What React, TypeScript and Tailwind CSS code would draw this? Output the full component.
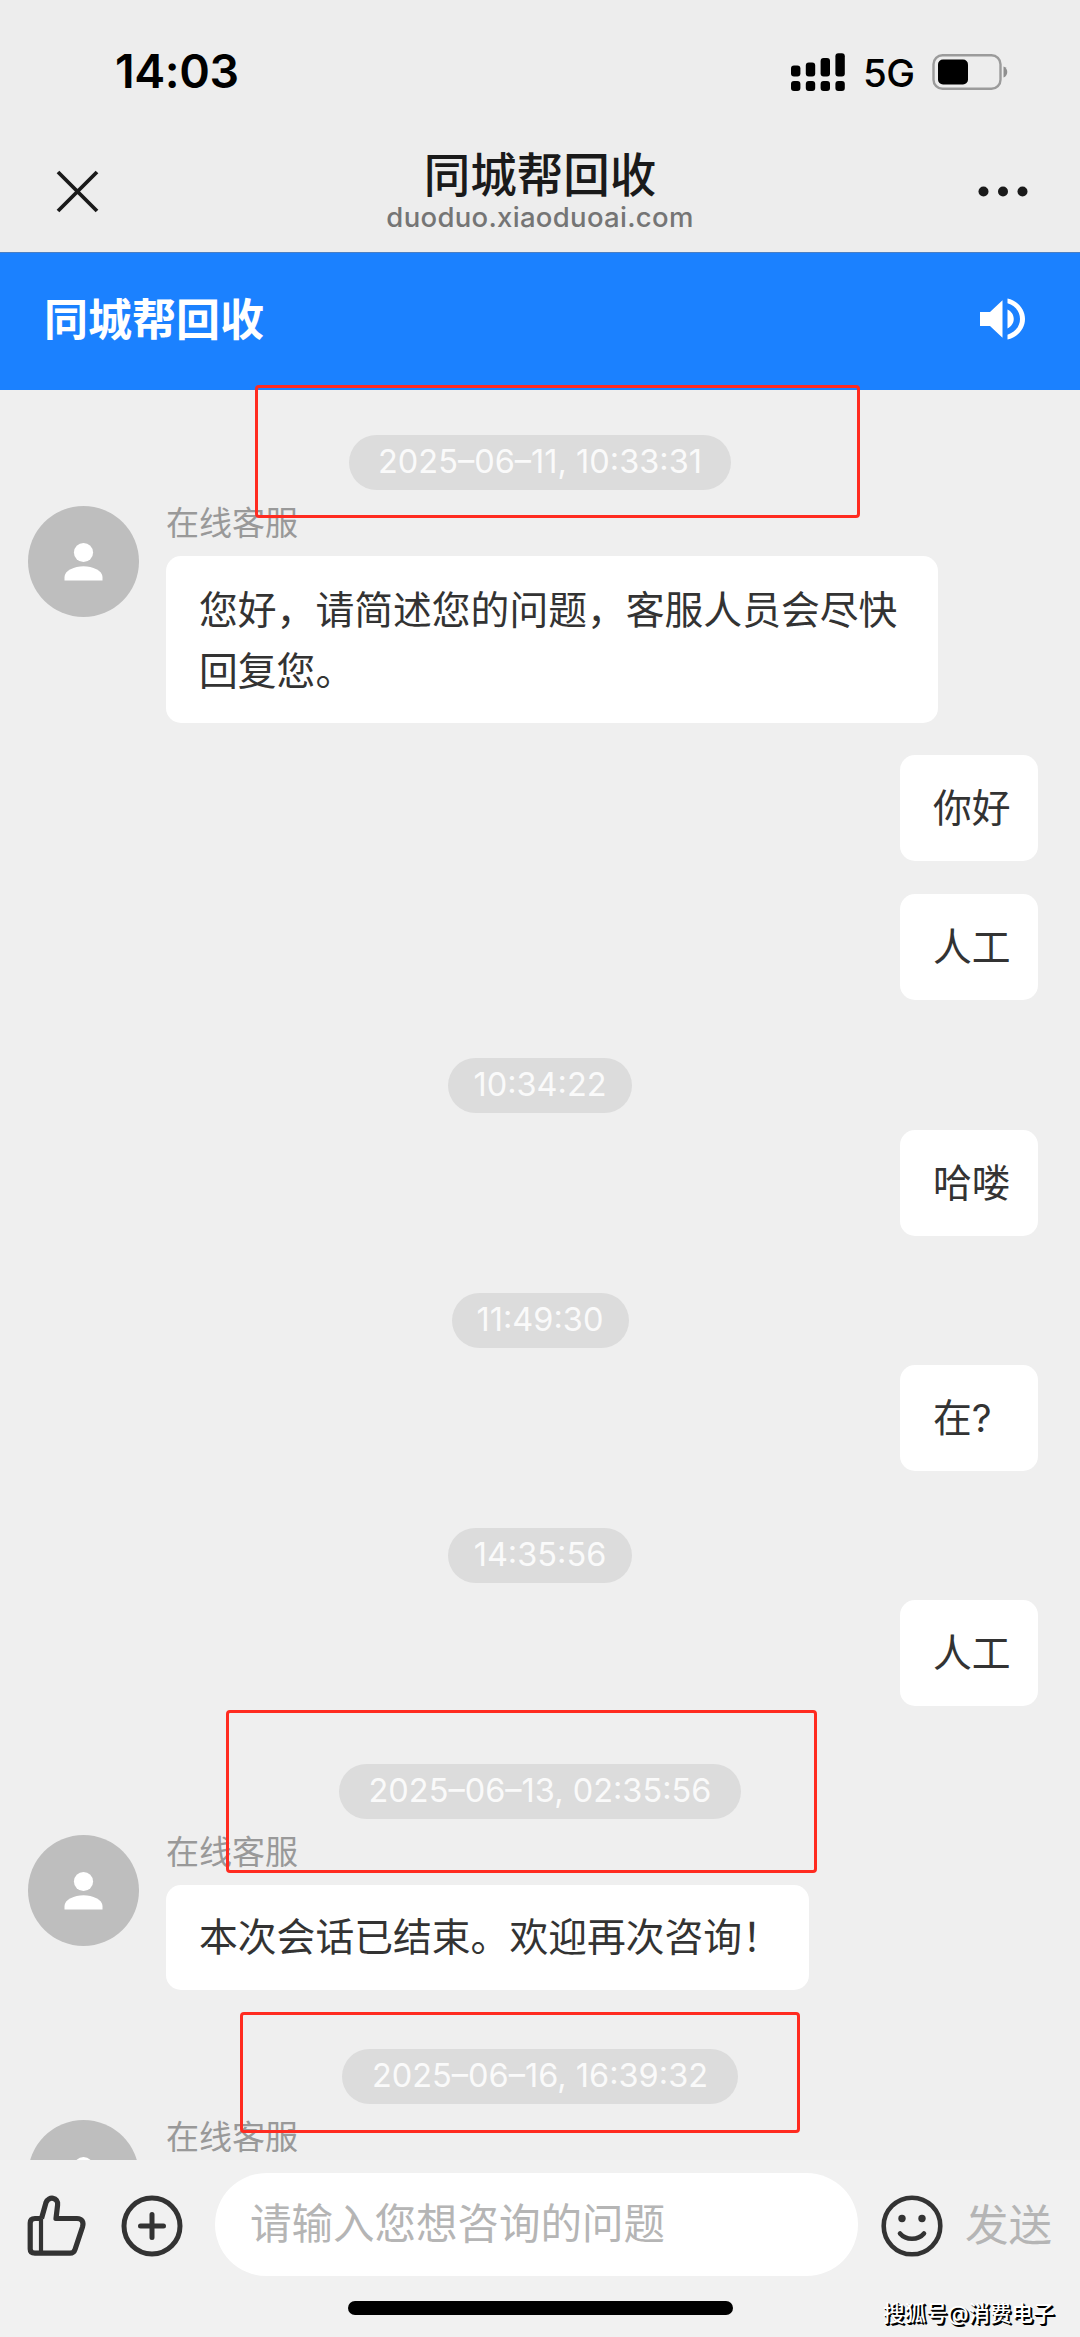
import React from "react";

const CJK = "font-['Inter','Noto_Sans_CJK_SC',sans-serif]";

function StatusBar() {
  return (
    <div className="flex h-[144px] shrink-0 items-center justify-between pl-[115px] pr-[72px]">
      <div className="-mt-[2px] text-[46.5px] leading-none font-semibold tracking-[-0.4px] text-black">14:03</div>
      <div className="flex items-center">
        <svg width="54" height="38" viewBox="0 0 54 38" fill="#000">
          <rect x="0" y="12.5" width="9.4" height="11" rx="3" />
          <rect x="14.8" y="9.5" width="9.4" height="14" rx="3" />
          <rect x="29.6" y="5" width="9.4" height="18.5" rx="3" />
          <rect x="44.4" y="0.3" width="9.4" height="23.2" rx="3" />
          <rect x="0" y="28" width="9.4" height="10" rx="3" />
          <rect x="14.8" y="28" width="9.4" height="10" rx="3" />
          <rect x="29.6" y="28" width="9.4" height="10" rx="3" />
          <rect x="44.4" y="28" width="9.4" height="10" rx="3" />
        </svg>
        <div className="ml-[18px] mt-[2px] w-[69px] text-[38.5px] leading-none font-[450] tracking-[-0.5px] text-black">5G</div>
        <svg width="76" height="36" viewBox="0 0 76 36">
          <rect x="1.5" y="1.2" width="67" height="33.6" rx="9" fill="none" stroke="#9b9b9b" strokeWidth="2.4" />
          <rect x="6" y="5.5" width="30" height="25" rx="5" fill="#000" />
          <path d="M71.5 12.5c5 1.6 5 9.4 0 11z" fill="#8f8f8f" />
        </svg>
      </div>
    </div>
  );
}

function TitleBar() {
  return (
    <div className="flex h-[108px] shrink-0 justify-between pl-[56px] pr-[52px]">
      <svg className="mt-[26px]" width="43" height="43" viewBox="0 0 43 43" stroke="#1a1a1a" strokeWidth="3.8">
        <path d="M2 2L41 41M41 2L2 41" />
      </svg>
      <div className="flex flex-col items-center pl-[3px]">
        <div className="mt-[4px] text-[46.5px] leading-[54px] font-medium text-[#1a1a1a]">同城帮回收</div>
        <div className="-mt-[1px] text-[27.5px] leading-[32px] font-medium tracking-[0.3px] text-[#757575]">duoduo.xiaoduoai.com</div>
      </div>
      <svg className="mt-[42px]" width="50" height="11" viewBox="0 0 50 11" fill="#1a1a1a">
        <circle cx="5.5" cy="5.5" r="5" />
        <circle cx="25" cy="5.5" r="5" />
        <circle cx="44.5" cy="5.5" r="5" />
      </svg>
    </div>
  );
}

function Banner() {
  return (
    <div className="flex h-[138px] shrink-0 items-center justify-between border-t border-[#4a7fc4] bg-[#1b81ff] pl-[44px] pr-[55px]">
      <div className="-mt-[4px] text-[44px] leading-none font-bold text-white">同城帮回收</div>
      <svg className="-mt-[5px]" width="45" height="42" viewBox="3 3 18 18" preserveAspectRatio="none" fill="#fff">
        <path d="M3 9v6h4l5 5V4L7 9H3zm13.5 3c0-1.77-1.02-3.29-2.5-4.03v8.05c1.48-.73 2.5-2.25 2.5-4.02zM14 3.23v2.06c2.89.86 5 3.54 5 6.71s-2.11 5.85-5 6.71v2.06c4.01-.91 7-4.49 7-8.77s-2.99-7.86-7-8.77z" />
      </svg>
    </div>
  );
}

function Time({ children, className }: { children: React.ReactNode; className: string }) {
  return (
    <div className={`mx-auto flex h-[55px] shrink-0 items-center justify-center rounded-full bg-[#dcdcdc] text-[32.5px] leading-none font-normal whitespace-nowrap text-[#fafafa] ${className}`}>
      {children}
    </div>
  );
}

function Mine({ children, className }: { children: React.ReactNode; className: string }) {
  return (
    <div className={`mr-[42px] flex h-[106px] w-[138px] shrink-0 items-center self-end rounded-[15px] bg-white pl-[33px] text-[38.8px] leading-none text-[#333] ${className}`}>
      {children}
    </div>
  );
}

function Agent({ children, className }: { children?: React.ReactNode; className: string }) {
  return (
    <div className={`flex shrink-0 items-start pl-[28px] ${className}`}>
      <svg className="-mt-[1px] shrink-0" width="111" height="111" viewBox="0 0 111 111">
        <circle cx="55.5" cy="55.5" r="55.5" fill="#bebebe" />
        <circle cx="55.5" cy="46.5" r="9.6" fill="#fff" />
        <path d="M36.5 74.5V71c0-6.500 10-10.800 19-10.800S74.500 64.500 74.500 71v3.500z" fill="#fff" />
      </svg>
      <div className="ml-[27px] flex flex-col items-start">
        <div className="h-[49px] text-[33px] leading-[32px] font-normal text-[#999]">在线客服</div>
        {children}
      </div>
    </div>
  );
}

function Footer() {
  return (
    <div className="flex h-[177px] shrink-0 flex-col bg-[#f1f1f1]">
      <div className="mt-[13px] flex h-[103px] shrink-0 items-center">
        <svg className="mt-[2px] ml-[27px]" width="60" height="62" viewBox="0 0 60 62" fill="none" stroke="#333" strokeWidth="5.2" strokeLinejoin="round">
          <path d="M14.500 23.500L19 7.500C21.500 1 31.500 2 30.600 10L29 23.500H50C55 23.500 57 27 55.500 32L48 54.500C47.200 57 46 58.200 43 58.200H8C4.800 58.200 3.200 57 3.200 54V28C3.200 25 4.800 23.500 8 23.500H14.500" />
          <path d="M14 23.500V58" strokeWidth="4.200" />
        </svg>
        <svg className="mt-[3px] ml-[34px]" width="62" height="62" viewBox="0 0 62 62" fill="none" stroke="#333" strokeWidth="5">
          <circle cx="31" cy="31" r="28" />
          <path d="M31 19.500V42.500M19.500 31H42.500" strokeLinecap="round" />
        </svg>
        <div className="ml-[32px] flex h-[103px] w-[643px] items-center rounded-full bg-white pl-[35px] text-[41.5px] leading-none font-normal text-[#b5b5b5]">请输入您想咨询的问题</div>
        <svg className="mt-[2px] ml-[23px]" width="62" height="62" viewBox="0 0 62 62" fill="none" stroke="#333" strokeWidth="4.6">
          <circle cx="31" cy="31" r="28.300" />
          <circle cx="21" cy="23.500" r="3.700" fill="#333" stroke="none" />
          <circle cx="41" cy="23.500" r="3.700" fill="#333" stroke="none" />
          <path d="M19 38.500C25 45.500 37 45.500 43 38.500" strokeLinecap="round" />
        </svg>
        <div className="mt-[2px] ml-[22px] text-[43.500px] leading-none font-normal text-[#b5b5b5]">发送</div>
      </div>
      <div className="mt-[25px] ml-[348px] h-[14px] w-[385px] shrink-0 rounded-full bg-black" />
    </div>
  );
}

export default function App() {
  return (
    <div className={`relative flex h-[2337px] w-[1080px] flex-col overflow-hidden bg-[#ededed] ${CJK}`}>
      <StatusBar />
      <TitleBar />
      <Banner />
      <div className="flex h-[1770px] shrink-0 flex-col overflow-hidden bg-[#efefef]">
        <Time className="mt-[45px] w-[382px]">2025–06–11, 10:33:31</Time>
        <Agent className="mt-[17px]">
          <div className="h-[167px] w-[772px] rounded-[15px] bg-white py-[22.5px] pl-[33px] text-[38.8px] leading-[61px] text-[#333]">
            您好，请简述您的问题，客服人员会尽快<br />回复您。
          </div>
        </Agent>
        <Mine className="mt-[32px]">你好</Mine>
        <Mine className="mt-[33px]">人工</Mine>
        <Time className="mt-[58px] w-[184px]">10:34:22</Time>
        <Mine className="mt-[17px]">哈喽</Mine>
        <Time className="mt-[57px] w-[177px]">11:49:30</Time>
        <Mine className="mt-[17px]">在?</Mine>
        <Time className="mt-[57px] w-[184px]">14:35:56</Time>
        <Mine className="mt-[17px]">人工</Mine>
        <Time className="mt-[58px] w-[402px]">2025–06–13, 02:35:56</Time>
        <Agent className="mt-[17px]">
          <div className="flex h-[105px] w-[643px] items-center rounded-[15px] bg-white pl-[33px] text-[38.8px] leading-none text-[#333]">本次会话已结束。欢迎再次咨询！</div>
        </Agent>
        <Time className="mt-[59px] w-[396px]">2025–06–16, 16:39:32</Time>
        <Agent className="mt-[17px]" />
      </div>
      <Footer />
      <div className="absolute top-[385px] left-[255px] h-[133px] w-[605px] rounded-[4px] border-[3px] border-[#ff2b20]" />
      <div className="absolute top-[1710px] left-[226px] h-[163px] w-[591px] rounded-[4px] border-[3px] border-[#ff2b20]" />
      <div className="absolute top-[2012px] left-[240px] h-[121px] w-[560px] rounded-[4px] border-[3px] border-[#ff2b20]" />
      <div className="absolute top-[2300px] left-[883px] text-[21.500px] leading-[26px] font-medium whitespace-nowrap text-white [text-shadow:1px_1px_0_#000,2px_2px_0_#000]">搜狐号@消费电子</div>
    </div>
  );
}
